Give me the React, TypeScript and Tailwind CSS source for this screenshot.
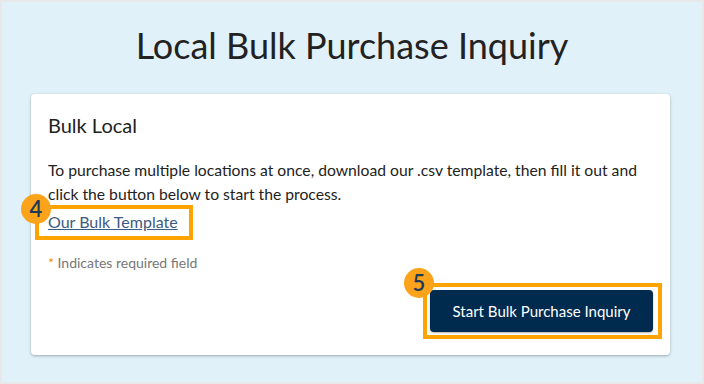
import React from "react";

const Badge = ({ n, className }: { n: string; className: string }) => (
  <span
    className={
      "absolute flex h-[30px] w-[30px] items-center justify-center rounded-full bg-[#fba31a] text-[22px] font-semibold leading-none text-[#1d3a57] " +
      className
    }
  >
    {n}
  </span>
);

const App = () => {
  return (
    <div className="h-[384px] w-[704px] border-2 border-[#e8e8e8] bg-[#e1f1f9] font-['Lato',sans-serif]">
      <h1 className="pt-[20px] pb-[26px] text-center text-[36px] leading-[46px] text-[#222]">
        Local Bulk Purchase Inquiry
      </h1>

      <div className="ml-[29px] mr-[32px] flex h-[261px] flex-col items-start rounded-[4px] bg-white px-[17px] pt-[18px] shadow-[0_1px_3px_rgba(0,0,0,0.3)]">
        <h2 className="text-[20px] leading-[26px] text-[#222]">Bulk Local</h2>

        <p className="mt-[20px] text-[15.7px] leading-[24px] text-[#222]">
          To purchase multiple locations at once, download our .csv template, then fill it out and
          click the button below to start the process.
        </p>

        <div className="relative mt-[4px]">
          <a href="#" className="text-[16px] leading-[24px] text-[#3d5a80] underline">
            Our Bulk Template
          </a>
          {/* tutorial highlight */}
          <span className="absolute -top-[5px] -left-[13px] -right-[15px] -bottom-[6px] border-4 border-[#ffa300]" />
          <Badge n="4" className="-top-[16px] -left-[27px]" />
        </div>

        <p className="mt-[19px] text-[14px] leading-[20px] text-[#777]">
          <span className="text-[#e8861a]">*</span> Indicates required field
        </p>

        <div className="relative mt-[17px] self-end">
          <button className="h-[42px] w-[223px] rounded-[4px] bg-[#002b4e] text-[15px] text-white shadow-[0_1px_2px_rgba(0,0,0,0.3)]">
            Start Bulk Purchase Inquiry
          </button>
          <span className="absolute -top-[7px] -left-[7px] -right-[9px] -bottom-[7px] border-4 border-[#ffa300]" />
          <Badge n="5" className="-top-[22px] -left-[26px]" />
        </div>
      </div>
    </div>
  );
};

export default App;
